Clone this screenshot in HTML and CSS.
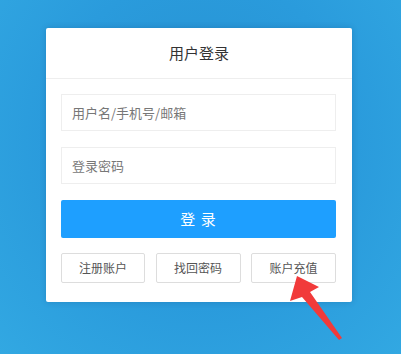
FILE: index.html
```html
<!DOCTYPE html>
<html lang="zh">
<head>
<meta charset="utf-8">
<link rel="stylesheet" href="styles.css">
</head>
<body>
<div class="page">
  <div class="card">
    <div class="card-head">用户登录</div>
    <div class="card-body">
      <div class="field">用户名/手机号/邮箱</div>
      <div class="field">登录密码</div>
      <div class="btn-primary">登 录</div>
      <div class="links">
        <div class="btn-link">注册账户</div>
        <div class="btn-link">找回密码</div>
        <div class="btn-link">账户充值</div>
      </div>
    </div>
  </div>
  <svg class="arrow" width="401" height="354" viewBox="0 0 401 354">
    <polygon points="297,276 319,287 310,292 342,338 339,340 302,297 290,301" fill="#f13a3a"/>
  </svg>
</div>
</body>
</html>
```
FILE: styles.css
```css
html, body {
  margin: 0;
  padding: 0;
}
body {
  width: 401px;
  height: 354px;
  overflow: hidden;
  font-family: "Noto Sans CJK SC", "Liberation Sans", sans-serif;
  background: radial-gradient(ellipse at 50% 40%, #2690d0 0%, #2a9bdc 55%, #32a8e2 100%);
}
.page {
  position: relative;
  width: 401px;
  height: 354px;
  padding-top: 28px;
  box-sizing: border-box;
}
.card {
  margin-left: 46px;
  width: 306px;
  background: #fff;
  border-radius: 2px;
  box-shadow: 0 0 6px rgba(0, 40, 90, 0.2);
}
.card-head {
  height: 50px;
  line-height: 50px;
  text-align: center;
  font-size: 15px;
  color: #333;
  border-bottom: 1px solid #eeeeee;
}
.card-body {
  padding: 15px 16px 19px 15px;
  display: flex;
  flex-direction: column;
}
.field {
  height: 37px;
  border: 1px solid #eeeeee;
  box-sizing: border-box;
  padding-left: 10px;
  line-height: 35px;
  font-size: 13px;
  color: #777;
  margin-bottom: 16px;
}
.btn-primary {
  height: 38px;
  line-height: 38px;
  background: #1e9fff;
  border-radius: 2px;
  color: #fff;
  font-size: 15px;
  letter-spacing: 1px;
  text-align: center;
}
.links {
  margin-top: 15px;
  display: grid;
  grid-template-columns: 84px 85px 85px;
  justify-content: space-between;
}
.btn-link {
  height: 30px;
  line-height: 28px;
  box-sizing: border-box;
  border: 1px solid #dddddd;
  border-radius: 2px;
  text-align: center;
  font-size: 12px;
  color: #555;
}
.arrow {
  position: absolute;
  left: 0;
  top: 0;
}
```
